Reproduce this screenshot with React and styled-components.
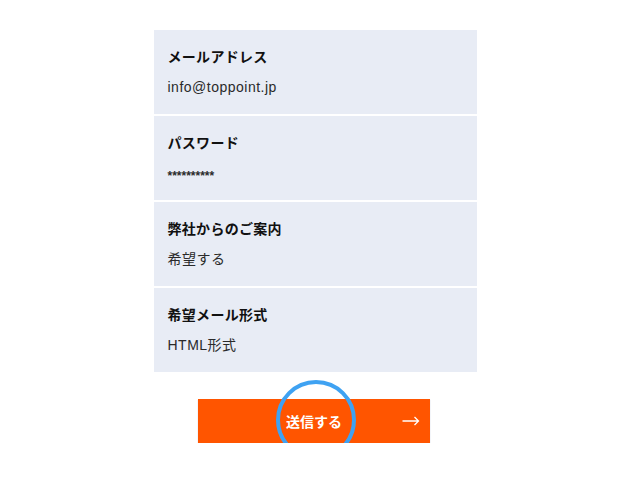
import styled, { createGlobalStyle } from 'styled-components'

const GlobalStyle = createGlobalStyle`
  html, body {
    margin: 0;
    padding: 0;
    background: #fff;
  }
  body {
    font-family: "Liberation Sans", "Noto Sans CJK JP", sans-serif;
    color: #1a1a1a;
  }
`;

const Page = styled.div`
  width: 630px;
  padding-top: 30px;
  display: flex;
  flex-direction: column;
  align-items: center;
`;

const List = styled.dl`
  margin: 0;
  width: 323px;
  display: flex;
  flex-direction: column;
  gap: 2px;
`;

const Item = styled.div`
  height: 84px;
  box-sizing: border-box;
  padding: 16px 14px 0;
  background: #e8ecf5;
`;

const Label = styled.dt`
  font-family: "Noto Sans CJK JP", sans-serif;
  font-size: 14px;
  font-weight: 700;
  line-height: 20px;
  letter-spacing: 0.3px;
  color: #111;
`;

const Value = styled.dd`
  margin: 11px 0 0;
  font-size: ${(props) => (props.secret ? '12px' : '14px')};
  line-height: 20px;
  letter-spacing: ${(props) => (props.secret ? '0' : '0.5px')};
  color: #2a2a2a;
  ${(props) => props.secret && 'position: relative; top: 3px; font-weight: 700;'}
`;

const SubmitWrap = styled.div`
  position: relative;
  margin-top: 27px;
  margin-left: -2px;
`;

const SubmitButton = styled.button`
  width: 232px;
  height: 44px;
  border: none;
  padding: 0;
  background: #ff5500;
  color: #fff;
  font-family: "Noto Sans CJK JP", sans-serif;
  font-size: 14px;
  font-weight: 700;
  display: flex;
  align-items: center;
  justify-content: center;
  position: relative;
  box-shadow: 0 1px 1px rgba(60, 90, 160, 0.35);
  cursor: pointer;
`;

const Arrow = styled.svg`
  position: absolute;
  right: 10px;
  top: 50%;
  transform: translateY(-50%);
`;

const Highlight = styled.span`
  position: absolute;
  left: 78px;
  top: -19px;
  width: 80px;
  height: 80px;
  box-sizing: border-box;
  border: 4px solid #3fa2f2;
  border-radius: 50%;
  pointer-events: none;
`;

const rows = [
  { label: 'メールアドレス', value: 'info@toppoint.jp' },
  { label: 'パスワード', value: '**********', secret: true },
  { label: '弊社からのご案内', value: '希望する' },
  { label: '希望メール形式', value: 'HTML形式' },
]

function App() {
  return (
    <>
      <GlobalStyle />
      <Page>
        <List>
          {rows.map((row) => (
            <Item key={row.label}>
              <Label>{row.label}</Label>
              <Value secret={row.secret}>{row.value}</Value>
            </Item>
          ))}
        </List>
        <SubmitWrap>
          <SubmitButton type="button">
            送信する
            <Arrow width="18" height="10" viewBox="0 0 18 10" fill="none">
              <path d="M0.5 5H16.5M12.5 1L16.5 5L12.5 9" stroke="#fff" strokeWidth="1.3" />
            </Arrow>
          </SubmitButton>
          <Highlight />
        </SubmitWrap>
      </Page>
    </>
  )
}

export default App
